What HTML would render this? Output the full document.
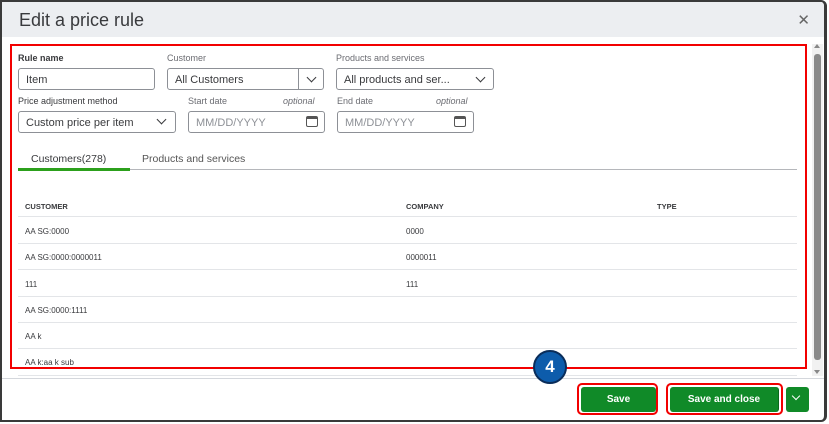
<!DOCTYPE html>
<html><head><style>
*{box-sizing:border-box;margin:0;padding:0}
body{width:829px;height:424px;overflow:hidden;background:#fff;font-family:"Liberation Sans",sans-serif;position:relative}
.frame{position:absolute;left:0;top:0;width:827px;height:422px;border:2px solid #3a3a3a;border-right-width:3px;border-bottom-width:2px;border-radius:0 6px 6px 0;background:#fff;overflow:hidden}
.hdr{position:absolute;left:0;top:0;right:0;height:35px;background:#eceef1}
.hdr h1{position:absolute;left:17px;top:8px;font-size:18px;font-weight:normal;color:#393a3d}
.x{position:absolute;right:14px;top:9px;font-size:15px;color:#666}
.abs{position:absolute}
.lbl{position:absolute;font-size:9px;color:#6b6c72}
.lbl.b{color:#393a3d;font-weight:bold}
.opt{position:absolute;font-size:9px;font-style:italic;color:#6b6c72}
.inp{position:absolute;height:22px;border:1px solid #8d9096;border-radius:3px;font-size:11px;color:#393a3d;padding:5px 7px;background:#fff}
.inp.ph{color:#8d9096}
.chev{position:absolute;width:7px;height:7px;border-right:1.5px solid #393a3d;border-bottom:1.5px solid #393a3d;transform:rotate(45deg)}
.cal{position:absolute;width:12px;height:11px;border:1.5px solid #555;border-top-width:3px;border-radius:2px}
.red{position:absolute;left:10px;top:44px;width:797px;height:325px;border:2px solid #f20000}
.row{position:absolute;left:18px;width:779px;height:1px;background:#e3e5e8}
.t{position:absolute;font-size:8px;color:#393a3d}
.th{position:absolute;font-size:7.5px;font-weight:bold;color:#393a3d}
.btn{position:absolute;top:387px;height:25px;background:#108a28;color:#fff;font-weight:bold;font-size:10px;text-align:center;line-height:25px;border-radius:3px}
.rb{position:absolute;border:2px solid #f20000;border-radius:5px}
</style></head><body>
<div class="frame">
<div class="hdr"><h1>Edit a price rule</h1><div class="x">✕</div></div>
</div>
<div class="lbl b" style="left:18px;top:53px">Rule name</div>
<div class="lbl" style="left:167px;top:53px">Customer</div>
<div class="lbl" style="left:336px;top:53px">Products and services</div>
<div class="inp" style="left:18px;top:68px;width:137px">Item</div>
<div class="inp" style="left:167px;top:68px;width:157px">All Customers</div>
<div class="abs" style="left:298px;top:69px;width:1px;height:20px;background:#8d9096"></div>
<div class="chev" style="left:308px;top:74px"></div>
<div class="inp" style="left:336px;top:68px;width:158px">All products and ser...</div>
<div class="chev" style="left:477px;top:74px"></div>
<div class="lbl b" style="left:18px;top:96px;font-weight:normal;color:#393a3d">Price adjustment method</div>
<div class="lbl" style="left:188px;top:96px">Start date</div>
<div class="opt" style="left:283px;top:96px">optional</div>
<div class="lbl" style="left:337px;top:96px">End date</div>
<div class="opt" style="left:436px;top:96px">optional</div>
<div class="inp" style="left:18px;top:111px;width:158px">Custom price per item</div>
<div class="chev" style="left:158px;top:116px"></div>
<div class="inp ph" style="left:188px;top:111px;width:137px">MM/DD/YYYY</div>
<div class="cal" style="left:306px;top:116px"></div>
<div class="inp ph" style="left:337px;top:111px;width:137px">MM/DD/YYYY</div>
<div class="cal" style="left:454px;top:116px"></div>
<div class="abs" style="left:31px;top:153px;font-size:10.5px;color:#393a3d">Customers(278)</div>
<div class="abs" style="left:142px;top:153px;font-size:10.5px;color:#555">Products and services</div>
<div class="abs" style="left:18px;top:169px;width:779px;height:1px;background:#b5b7bb"></div>
<div class="abs" style="left:18px;top:168px;width:112px;height:3px;background:#2ca01c"></div>
<div class="th" style="left:25px;top:202px">CUSTOMER</div>
<div class="th" style="left:406px;top:202px">COMPANY</div>
<div class="th" style="left:657px;top:202px">TYPE</div>
<div class="row" style="top:216px"></div>
<div class="t" style="left:25px;top:227px">AA SG:0000</div><div class="t" style="left:406px;top:227px">0000</div>
<div class="row" style="top:243px"></div>
<div class="t" style="left:25px;top:253px">AA SG:0000:0000011</div><div class="t" style="left:406px;top:253px">0000011</div>
<div class="row" style="top:269px"></div>
<div class="t" style="left:25px;top:280px">111</div><div class="t" style="left:406px;top:280px">111</div>
<div class="row" style="top:296px"></div>
<div class="t" style="left:25px;top:306px">AA SG:0000:1111</div>
<div class="row" style="top:322px"></div>
<div class="t" style="left:25px;top:332px">AA k</div>
<div class="row" style="top:348px"></div>
<div class="t" style="left:25px;top:358px">AA k:aa k sub</div>
<div class="row" style="top:375px"></div>
<div class="red"></div>
<div class="abs" style="left:812px;top:44px;width:11px;height:332px;background:#f1f1f1"></div>
<div class="abs" style="left:814px;top:54px;width:7px;height:306px;background:#8a8a8a;border-radius:3px"></div>
<div class="abs" style="left:814px;top:44px;width:0;height:0;border:3.5px solid transparent;border-bottom:4px solid #888;border-top:0"></div>
<div class="abs" style="left:814px;top:370px;width:0;height:0;border:3.5px solid transparent;border-top:4px solid #888;border-bottom:0"></div>
<div class="abs" style="left:2px;top:378px;width:822px;height:1px;background:#d4d7dc"></div>
<div class="abs" style="left:533px;top:350px;width:34px;height:34px;border-radius:50%;background:#0d5cab;border:2px solid #0a2d5a;color:#fff;font-weight:bold;font-size:17px;text-align:center;line-height:30px">4</div>
<div class="btn" style="left:581px;width:75px">Save</div>
<div class="rb" style="left:577px;top:383px;width:81px;height:32px"></div>
<div class="btn" style="left:670px;width:109px;border-right:1px solid #0a6a1c">Save and close</div>
<div class="rb" style="left:666px;top:383px;width:117px;height:32px"></div>
<div class="btn" style="left:786px;width:23px"></div>
<div class="chev" style="left:793px;top:393px;border-color:#fff;width:6px;height:6px"></div>
</body></html>
